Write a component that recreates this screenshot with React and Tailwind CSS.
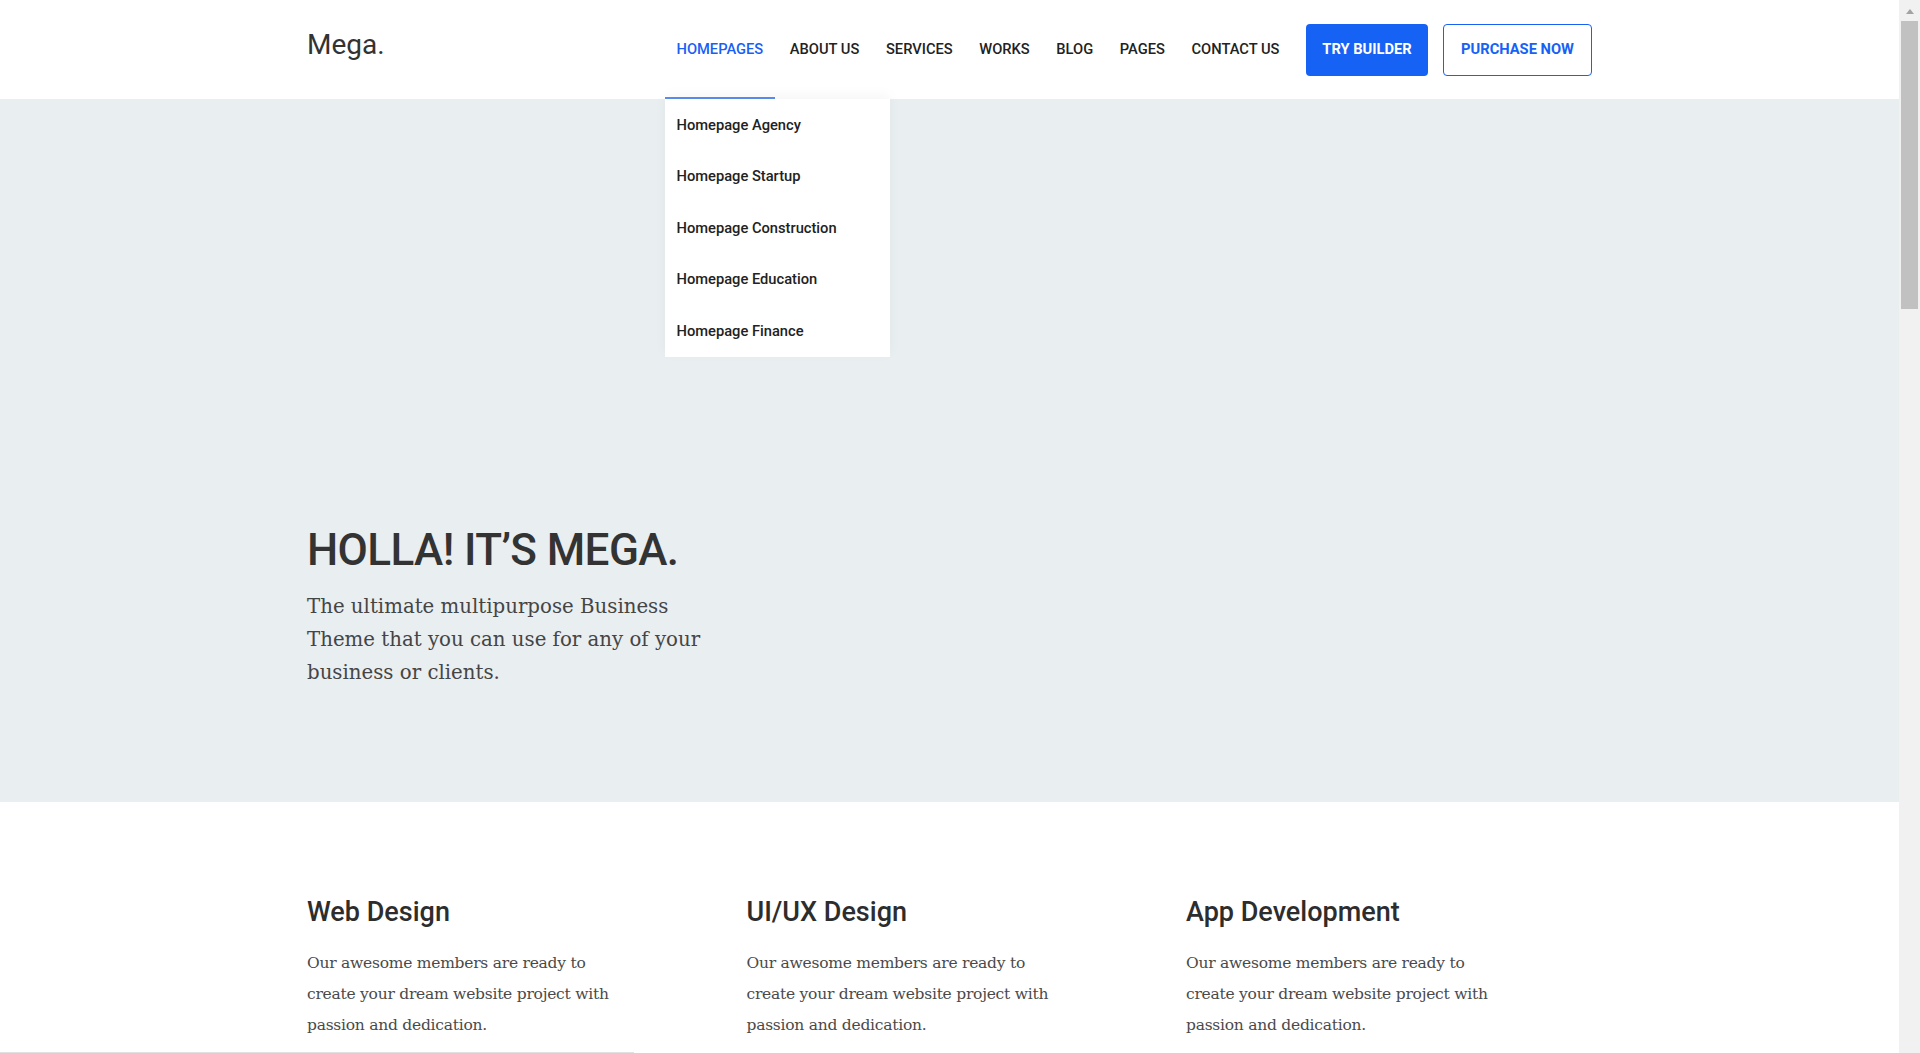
import React, { useState } from "react";

const navItems = ["Homepages", "About Us", "Services", "Works", "Blog", "Pages", "Contact Us"];

const homepages = [
  "Homepage Agency",
  "Homepage Startup",
  "Homepage Construction",
  "Homepage Education",
  "Homepage Finance",
];

const services = [
  { title: "Web Design" },
  { title: "UI/UX Design" },
  { title: "App Development" },
];

function Header() {
  const [active] = useState("Homepages");

  return (
    <header className="relative z-10 h-[99px] bg-white">
      <div className="mx-auto flex h-full w-[1285px] items-center justify-between">
        {/* Logo */}
        <a href="#" className="mb-[9px] text-[28px] leading-none text-[#333]">
          Mega.
        </a>

        <div className="flex h-full items-center">
          {/* Menu */}
          <ul className="flex h-full items-stretch gap-[3.6px]">
            {navItems.map((item) => (
              <li
                key={item}
                className={
                  item === active
                    ? "relative flex items-center border-b-2 border-[#5a8ef2] px-[11.5px] pt-[1px]"
                    : "relative flex items-center border-b-2 border-transparent px-[11.5px] pt-[1px]"
                }
              >
                <a
                  href="#"
                  className={
                    item === active
                      ? "text-[14.7px] font-medium uppercase text-[#1a5ff4]"
                      : "text-[14.7px] font-medium uppercase text-[#222]"
                  }
                >
                  {item}
                </a>

                {item === active && (
                  <div className="absolute left-0 top-[calc(100%+2px)] w-[225px] bg-white shadow-[0_-4px_12px_rgba(0,0,0,0.04)]">
                    {homepages.map((page) => (
                      <a
                        key={page}
                        href="#"
                        className="flex h-[51.5px] items-center px-[11.5px] text-[14.7px] font-medium text-[#222]"
                      >
                        {page}
                      </a>
                    ))}
                  </div>
                )}
              </li>
            ))}
          </ul>

          {/* Buttons */}
          <div className="ml-[15px] flex items-center gap-[15px]">
            <a
              href="#"
              className="flex h-[52px] w-[122px] items-center justify-center rounded-[4px] bg-[#1662f4] text-[14.7px] font-bold uppercase text-white"
            >
              Try Builder
            </a>
            <a
              href="#"
              className="flex h-[52px] w-[149px] items-center justify-center rounded-[4px] border border-[#1662f4] text-[14.7px] font-bold uppercase text-[#1662f4]"
            >
              Purchase Now
            </a>
          </div>
        </div>
      </div>
    </header>
  );
}

function Hero() {
  return (
    <section className="h-[703px] bg-[#e9eef1]">
      <div className="mx-auto w-[1285px] pt-[425px]">
        <h1 className="text-[44px] font-medium leading-[1.2] tracking-[-0.6px] text-[#333]">
          HOLLA! IT’S MEGA.
        </h1>
        <p className="mt-[13px] font-['DejaVu_Serif',serif] text-[19.75px] leading-[33px] text-[#454545]">
          The ultimate multipurpose Business
          <br />
          Theme that you can use for any of your
          <br />
          business or clients.
        </p>
      </div>
    </section>
  );
}

function Services() {
  return (
    <section className="bg-white pb-[80px] pt-[94px]">
      <div className="mx-auto grid w-[1285px] grid-cols-3 gap-[33.5px]">
        {services.map((s) => (
          <div key={s.title}>
            <h3 className="text-[27px] font-medium leading-[1.24] text-[#2d2d2d]">
              {s.title}
            </h3>
            <p className="mt-[19px] font-['DejaVu_Serif',serif] text-[15.5px] leading-[31px] tracking-[-0.25px] text-[#4a4a4a]">
              Our awesome members are ready to
              <br />
              create your dream website project with
              <br />
              passion and dedication.
            </p>
          </div>
        ))}
      </div>
    </section>
  );
}

function Scrollbar() {
  return (
    <div className="flex w-[21px] shrink-0 flex-col items-center bg-[#f1f1f1]">
      <div className="mt-[9px] h-0 w-0 border-x-[4.5px] border-b-[5px] border-x-transparent border-b-[#a3a3a3]" />
      <div className="mt-[7px] h-[288px] w-[17px] bg-[#c1c1c1]" />
    </div>
  );
}

export default function App() {
  return (
    <div className="flex h-screen overflow-hidden bg-white font-[Roboto,sans-serif]">
      <div className="relative flex-1 overflow-hidden">
        <Header />
        <Hero />
        <Services />
        <div className="absolute bottom-0 left-0 h-px w-[634px] bg-[#e0e0e0]" />
      </div>
      <Scrollbar />
    </div>
  );
}
